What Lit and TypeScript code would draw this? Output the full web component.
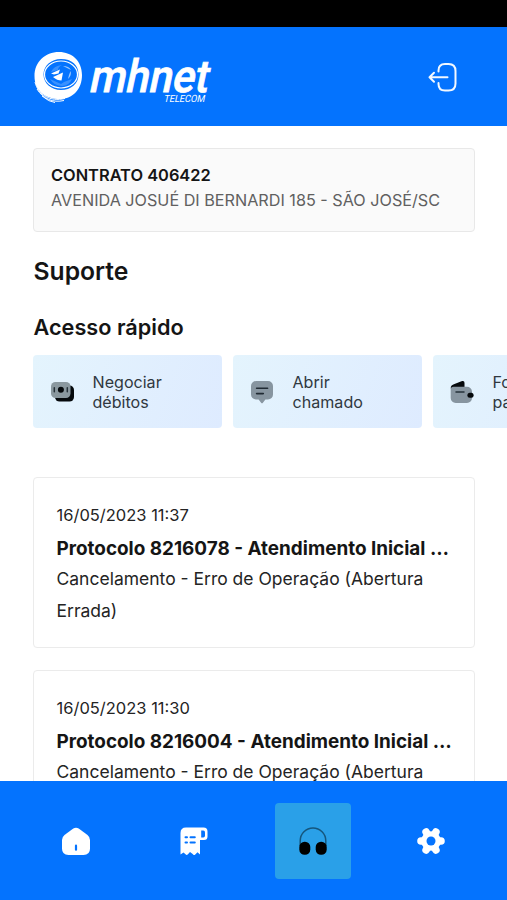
import { LitElement, html, css, svg } from "lit";
import { customElement, property } from "lit/decorators.js";

const icons = {
  money: svg`
    <rect x="5" y="5.500" width="19" height="16" rx="4.500" fill="#05090c"/>
    <rect x="1" y="2" width="19.500" height="16" rx="4.500" fill="#8a989f"/>
    <circle cx="10.900" cy="9.800" r="3" fill="#05090c"/>
    <path d="M4.300 7.800v4M17.300 7.800v4" stroke="#26323a" stroke-width="1.500" stroke-linecap="round"/>`,
  chat: svg`
    <path d="M6 1h12a5 5 0 0 1 5 5v8.500a5 5 0 0 1-5 5h-2.600l-2.500 3.200a1.200 1.200 0 0 1-1.800 0L8.600 19.500H6a5 5 0 0 1-5-5V6a5 5 0 0 1 5-5z" fill="#8795a0"/>
    <path d="M6.600 8.300h11M6.600 13.600h6.700" stroke="#202a33" stroke-width="1.600" stroke-linecap="round"/>`,
  wallet: svg`
    <path d="M.700 8.600C.700 5.600 2 4.800 4.500 3.900L11.500 1.200C13.600.500 14.500 1.300 14.500 3.200V9z" fill="#05090c"/>
    <path d="M.700 9.600a2.800 2.800 0 0 1 2.800-2.800H17a5 5 0 0 1 5 5V18a5 5 0 0 1-5 5H5.700a5 5 0 0 1-5-5z" fill="#8795a0"/>
    <path d="M6 12.100h8" stroke="#26323a" stroke-width="1.500" stroke-linecap="round"/>
    <rect x="17.400" y="12.800" width="6.200" height="5" rx="2.500" fill="#05090c"/>`,
};

@customElement("brand-logo")
export class BrandLogo extends LitElement {
  static styles = css`
    :host { display: block; width: 180px; height: 56px; }
    svg { display: block; overflow: visible; }
    .name { font: 500 42px Roboto, "Liberation Sans", sans-serif; }
    .sub { font: 400 10px Roboto, "Liberation Sans", sans-serif; }
  `;
  render() {
    return html`<svg width="180" height="56" viewBox="0 0 180 56" fill="#fff">
      <g transform="translate(1 2)">
        <path fill-rule="evenodd" d="M25 1C38 1 48 10 48 24S39 48 26 48C11 48 .5 40 .5 25C.5 11 11 1 25 1zM27 8C17 8 9.500 15 9.500 23.500S17 39 27 39S44.500 33 44.500 23.500S38 8 27 8z"/>
        <g fill="none" stroke="#fff">
          <ellipse cx="27" cy="23.500" rx="16.500" ry="13.500" stroke-width="1.200"/>
          <path d="M1 31C4 44 16 51 31 47.500M3 38C9 48 19 52 30 49.500M8 45Q15 51 21 51.500" stroke-width="1"/>
        </g>
        <path d="M17 21Q20 14.500 28 14Q24 16 24 19zM16 28Q20 35 28 35Q35 35 38 28L30 31L27 33z" opacity=".22"/>
        <path d="M17 22.500L26 18.500L24.500 22.500L20 23.500zM19 26L29 21.500L27.500 29.500Q23 29.500 19 26z"/>
        <path d="M29 15Q35 15 37 19L33 17zM34 28Q38 24 36.500 20L35 24z" opacity=".6"/>
      </g>
      <g transform="translate(55 42.500) skewX(-12) scale(1 1.080)">
        <text class="name" x="0" y="0" textLength="119" lengthAdjust="spacingAndGlyphs" stroke="#fff" stroke-width=".7">mhnet</text>
      </g>
      <g transform="translate(130.500 53.200) skewX(-12)">
        <text class="sub" x="0" y="0" textLength="41" lengthAdjust="spacingAndGlyphs">TELECOM</text>
      </g>
    </svg>`;
  }
}

@customElement("quick-action")
export class QuickAction extends LitElement {
  @property() icon: keyof typeof icons = "money";
  @property() label = "";
  static styles = css`
    :host {
      display: flex; align-items: center; flex: none; box-sizing: border-box;
      width: 189px; height: 73px; padding-left: 17px; gap: 18.500px;
      border-radius: 4px; background: linear-gradient(110deg, #e4f4fd, #deebff);
    }
    svg { flex: none; }
    .label { font-size: 16.100px; line-height: 20px; color: #30383f; white-space: pre-line; }
  `;
  render() {
    return html`<svg width="24" height="24" viewBox="0 0 24 24" fill="none">${icons[this.icon]}</svg>
      <span class="label">${this.label}</span>`;
  }
}

@customElement("ticket-card")
export class TicketCard extends LitElement {
  @property() date = "";
  @property() heading = "";
  @property() text = "";
  static styles = css`
    :host {
      display: block; box-sizing: border-box; height: 171px; padding: 21px 21px 0 22.500px;
      border: 1.500px solid #ebebeb; border-radius: 4px; background: #fff; color: #242424;
    }
    .date { font-size: 16.500px; line-height: 32px; }
    .heading { font-size: 18.900px; line-height: 32px; margin-top: 2px; font-weight: 700; color: #151515; white-space: nowrap; }
    .text { font-size: 17.500px; line-height: 32px; margin-top: -2px; }
  `;
  render() {
    return html`<div class="date">${this.date}</div>
      <div class="heading">${this.heading}</div>
      <div class="text">${this.text}</div>`;
  }
}

@customElement("app-root")
export class AppRoot extends LitElement {
  static styles = css`
    :host {
      display: flex; flex-direction: column; width: 507px; height: 900px; overflow: hidden;
      background: #fff; font-family: Inter, "Liberation Sans", sans-serif; color: #151515;
    }
    .status { flex: none; height: 27px; background: #000; }
    .header {
      flex: none; height: 99px; box-sizing: border-box; padding: 1px 49px 0 33px;
      display: flex; align-items: center; justify-content: space-between; background: #0473fe;
    }
    .content { flex: 1; min-height: 0; overflow: hidden; padding: 22px 32px 0 33px; }
    .contract {
      box-sizing: border-box; height: 84px; padding: 14px 17px;
      border: 1.500px solid #e8e8e8; border-radius: 4px; background: #fafafa;
      line-height: 24px; white-space: nowrap;
    }
    .number { font-size: 16.400px; font-weight: 600; }
    .address { font-size: 16.200px; line-height: 26px; color: #606060; }
    .title { margin: 23px 0 0; font-size: 24.700px; line-height: 32px; font-weight: 600; }
    .subtitle { margin: 26px 0 0; font-size: 21.700px; line-height: 28px; font-weight: 600; }
    .title, .subtitle { padding-left: .500px; }
    .actions { display: flex; gap: 11px; margin: 14px -32px 49px 0; overflow: hidden; }
    .tickets { display: flex; flex-direction: column; gap: 22px; }
    .nav {
      flex: none; height: 119px; box-sizing: border-box; padding: 0 17px 0 17px;
      display: grid; grid-template-columns: repeat(4, 1fr); justify-items: center; align-items: center;
      background: #0473fe;
    }
    .tab { display: grid; place-items: center; width: 76px; height: 76px; border-radius: 4px; }
    .active { background: #2aa0e8; }
  `;
  render() {
    return html`
      <div class="status"></div>
      <header class="header">
        <brand-logo></brand-logo>
        <svg width="30" height="30" viewBox="0 0 30 30" fill="none" stroke="#f2f8ff" stroke-width="2" stroke-linecap="round" stroke-linejoin="round">
          <path d="M10.500 9.500V8.500Q10.500 2 17 2H20.500Q27.500 2 27.500 9V21.500Q27.500 28.500 20.500 28.500H17Q10.500 28.500 10.500 22V21M19.500 15.200H1.500M6 10.700L1.500 15.200L6 19.700"/>
        </svg>
      </header>
      <main class="content">
        <section class="contract">
          <div class="number">CONTRATO 406422</div>
          <div class="address">AVENIDA JOSUÉ DI BERNARDI 185 - SÃO JOSÉ/SC</div>
        </section>
        <h1 class="title">Suporte</h1>
        <h2 class="subtitle">Acesso rápido</h2>
        <div class="actions">
          <quick-action icon="money" label=${"Negociar\ndébitos"}></quick-action>
          <quick-action icon="chat" label=${"Abrir\nchamado"}></quick-action>
          <quick-action icon="wallet" label=${"Formas de\npagamento"}></quick-action>
        </div>
        <div class="tickets">
          <ticket-card date="16/05/2023 11:37" heading="Protocolo 8216078 - Atendimento Inicial …" text="Cancelamento - Erro de Operação (Abertura Errada)"></ticket-card>
          <ticket-card date="16/05/2023 11:30" heading="Protocolo 8216004 - Atendimento Inicial …" text="Cancelamento - Erro de Operação (Abertura Errada)"></ticket-card>
        </div>
      </main>
      <nav class="nav">
        <div class="tab"><svg width="28" height="28" viewBox="0 0 28 28">
          <path d="M11.300 1.400Q14 .100 16.700 1.400L25.500 8Q28 10 28 13V21.500Q28 28 21.500 28H6.500Q0 28 0 21.500V13Q0 10 2.500 8z" fill="#fff"/>
          <path d="M14 18.700V22.700" stroke="#0473fe" stroke-width="2.200" stroke-linecap="round"/>
        </svg></div>
        <div class="tab"><svg width="28" height="28" viewBox="0 0 28 28">
          <path d="M6 .500H23.500Q27.500.500 27.500 4.500V9.500Q27.500 13 24 13H20V27.500L17.500 25.200L15 27.800Q13.700 28.500 12.700 27L10 25L7.700 27.500Q6.500 28.500 5.500 27.200L3.500 25.500L.500 27.500V6Q.500.500 6 .500z" fill="#fff"/>
          <path d="M21.200 3.500H23.300Q25 3.500 25 5.500V8.500Q25 10.500 23.300 10.500H21.200z" fill="#0473fe"/>
          <path d="M5.500 10.200H7M5.500 15.500H7M10.500 10.200H14.800M10.500 15.500H14.800" stroke="#0473fe" stroke-width="2" stroke-linecap="round"/>
        </svg></div>
        <div class="tab active"><svg width="28" height="28" viewBox="0 0 28 28">
          <path d="M1.200 19V13.800a12.800 12.800 0 0 1 25.600 0V19" fill="none" stroke="#15567d" stroke-width="1.500"/>
          <rect x=".3" y="14.800" width="11" height="13" rx="5.300" fill="#000"/>
          <rect x="16.700" y="14.800" width="11" height="13" rx="5.300" fill="#000"/>
        </svg></div>
        <div class="tab"><svg width="28" height="28" viewBox="0 0 28 28">
          <g stroke="#fff" stroke-width="7.600" stroke-linecap="round">
            <path d="M4 14H24M9.100 5L18.900 23M18.900 5L9.100 23"/>
          </g>
          <circle cx="14" cy="14" r="9.800" fill="#fff"/>
          <circle cx="14" cy="14" r="4.500" fill="#0473fe"/>
        </svg></div>
      </nav>`;
  }
}
